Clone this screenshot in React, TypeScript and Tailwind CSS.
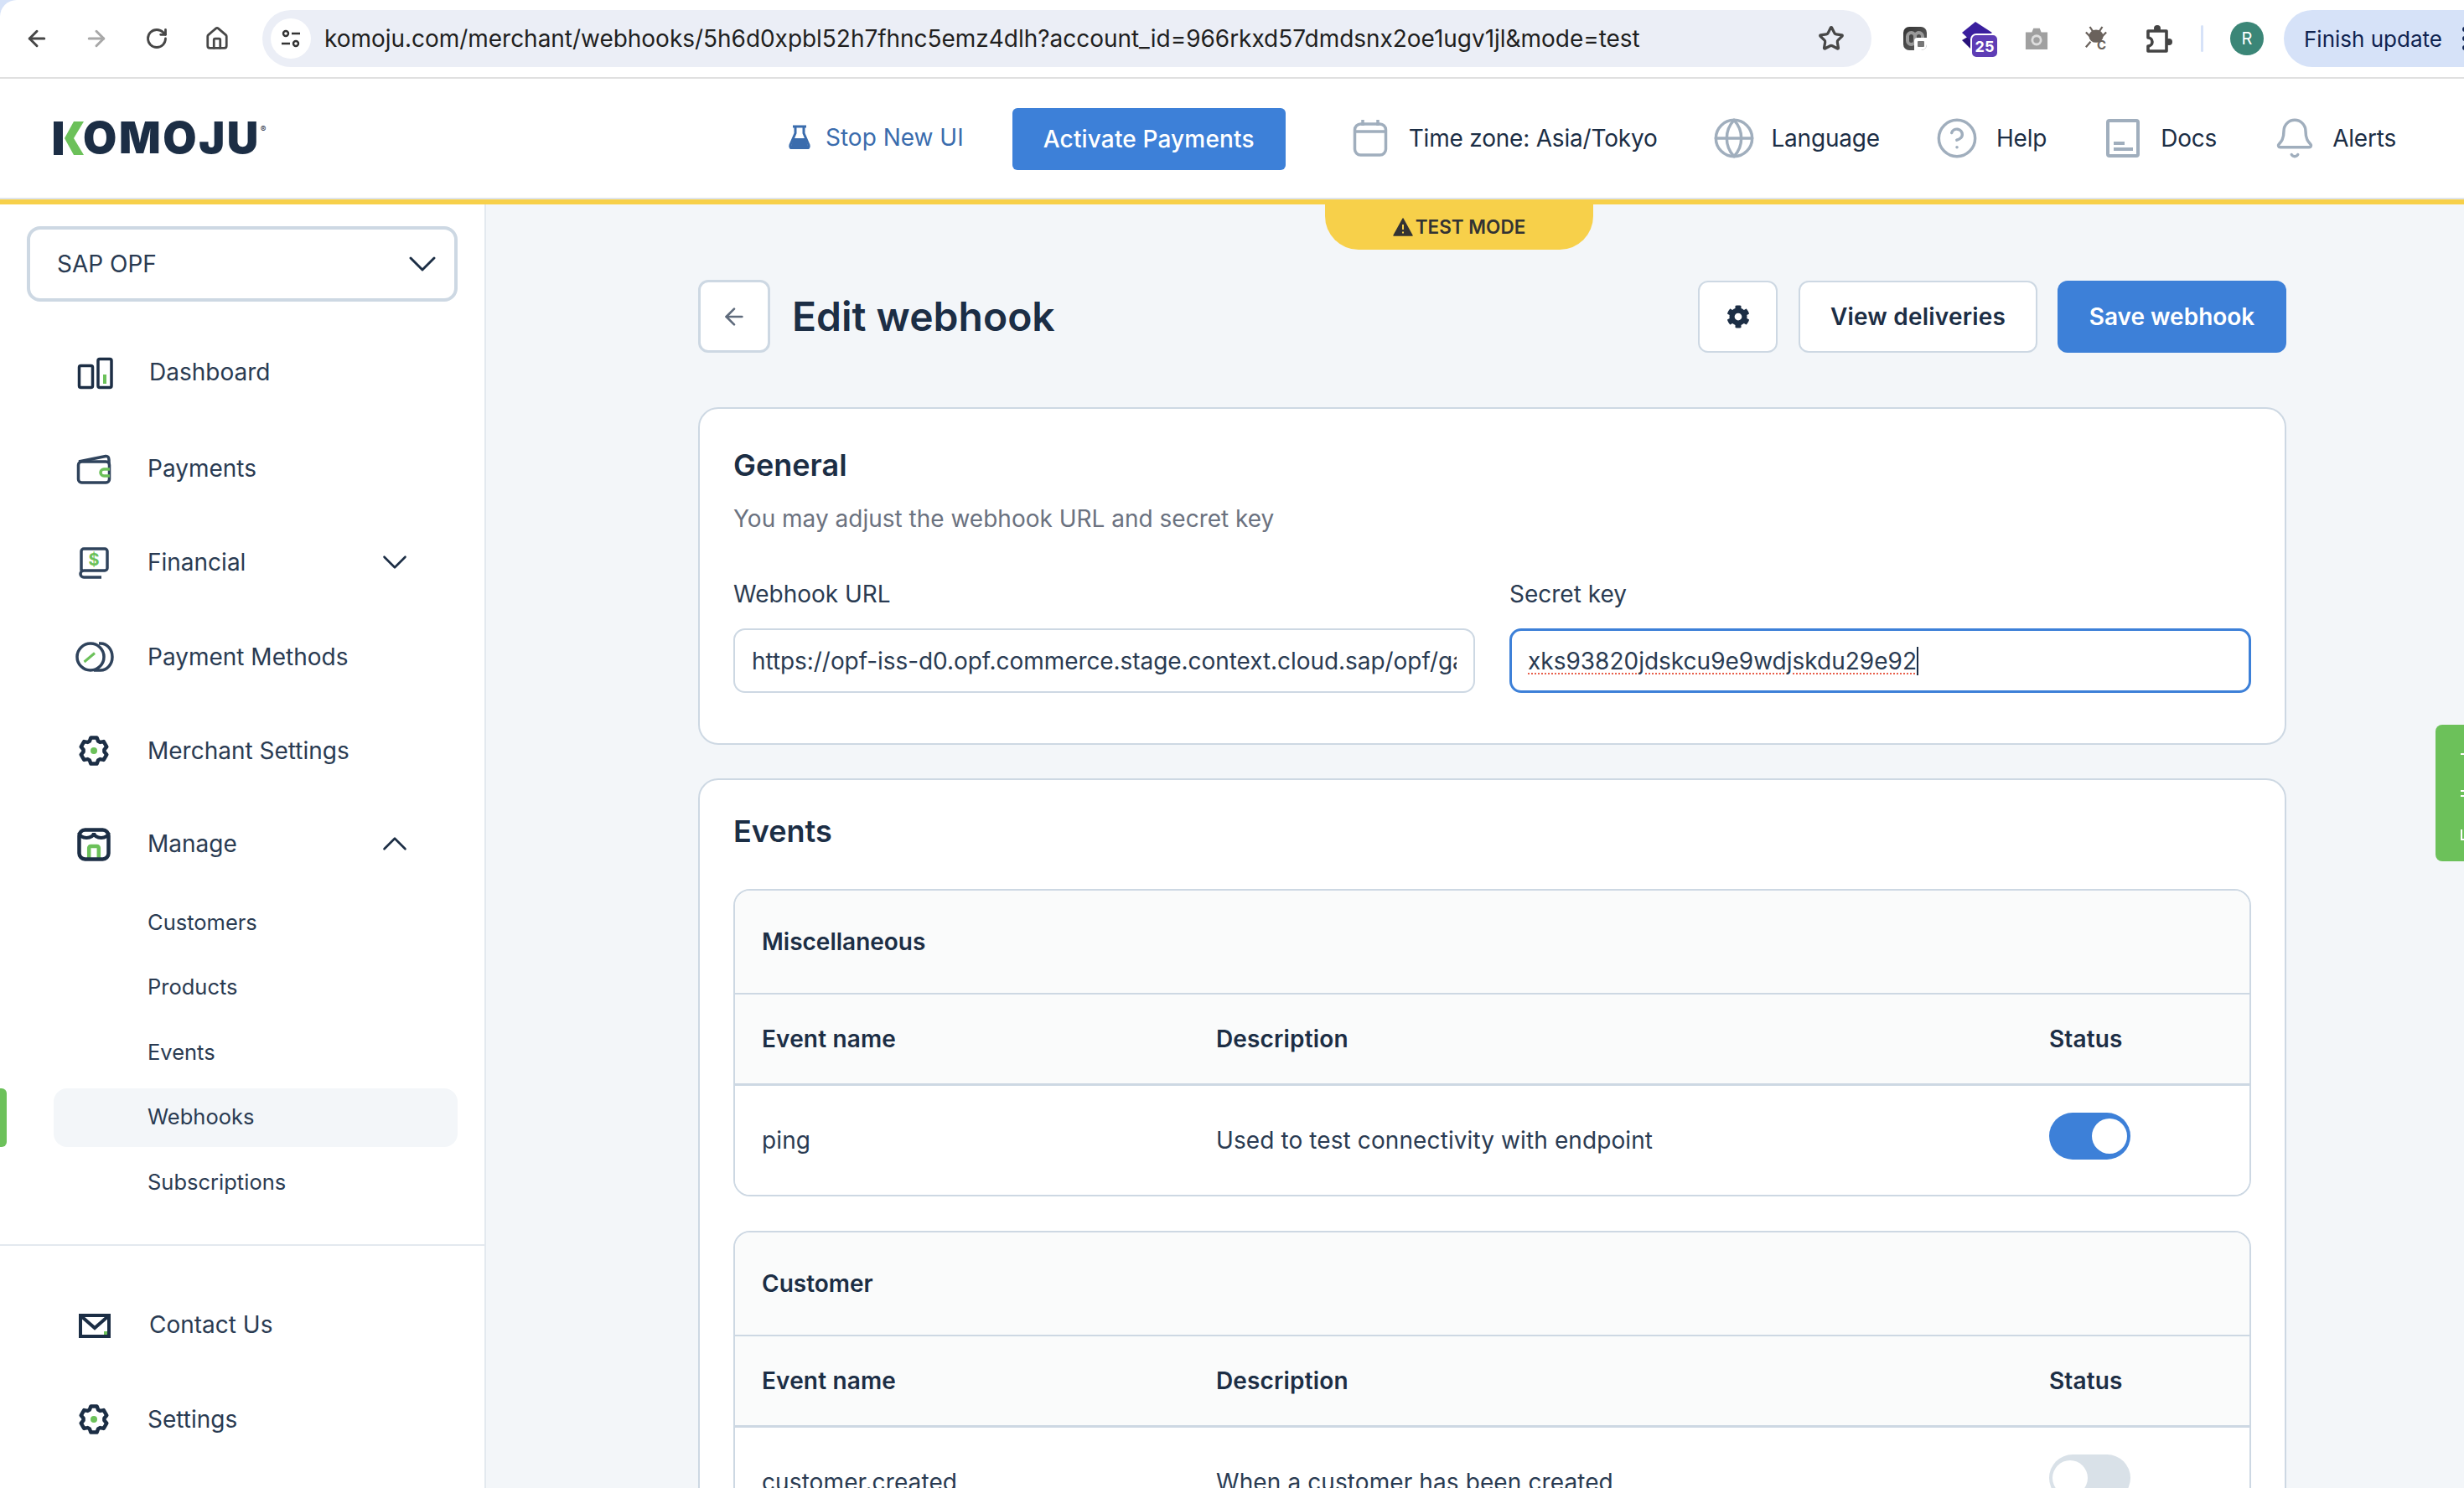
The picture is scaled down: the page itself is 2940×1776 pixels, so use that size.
import { ArrowLeft, ArrowRight, RotateCw, Home, Star, ChevronDown, ChevronUp, Globe, CircleHelp, Bell } from "lucide-react";
import { FaCog } from "react-icons/fa";

const NAVY = "#1c2e45";
const GREEN = "#6cc15a";

// six squared teeth, rounded off by the stroke join
const GEAR = Array.from({ length: 6 }, (_, i) => {
  const a = i * 60 - 90;
  const pt = (deg: number, r: number) => {
    const t = ((a + deg) * Math.PI) / 180;
    return `${(24 + r * Math.cos(t)).toFixed(2)} ${(24 + r * Math.sin(t)).toFixed(2)}`;
  };
  return `${i === 0 ? "M" : "L"}${pt(-24, 12.5)} L${pt(-13, 16)} L${pt(13, 16)} L${pt(24, 12.5)}`;
}).join(" ") + " Z";

function DashIcon() {
  return (
    <svg width="48" height="48" viewBox="0 0 48 48" fill="none" stroke={NAVY} strokeWidth="3.5">
      <rect x="6.5" y="16.5" width="16" height="26" rx="2" />
      <rect x="29" y="8.5" width="16" height="34" rx="2" />
      <rect x="35" y="27" width="4" height="11" fill={GREEN} stroke="none" />
    </svg>
  );
}

function WalletIcon() {
  return (
    <svg width="48" height="48" viewBox="0 0 48 48" fill="none" stroke="#2f435c" strokeWidth="3.5">
      <rect x="5.5" y="16" width="37" height="25" rx="4" />
      <path d="M6 16 L38 9.5 Q42 9 42 14 V18" />
      <path d="M43 25 H36 a4 4 0 0 0 0 8 H43" stroke={GREEN} />
    </svg>
  );
}

function FinancialIcon() {
  return (
    <svg width="48" height="48" viewBox="0 0 48 48" fill="none" stroke="#2f435c" strokeWidth="3.5">
      <path d="M9 34 V11 a3 3 0 0 1 3-3 H37 a3 3 0 0 1 3 3 V31 a3 3 0 0 1-3 3 H12 a3 3 0 0 0 0 8 H33" />
      <text x="24" y="28" textAnchor="middle" fontFamily="Inter, sans-serif" fontWeight="700" fontSize="20" fill={GREEN} stroke="none">$</text>
    </svg>
  );
}

function MethodsIcon() {
  return (
    <svg width="48" height="48" viewBox="0 0 48 48" fill="none" stroke="#2f435c" strokeWidth="3.5">
      <circle cx="20" cy="24" r="16" />
      <path d="M30 8 H32 a14 16 0 0 1 0 32 H24" />
      <path d="M12.5 30 L25 19.5" stroke={GREEN} strokeWidth="3" />
    </svg>
  );
}

function GearIcon() {
  return (
    <svg width="48" height="48" viewBox="0 0 48 48" fill="none" stroke={NAVY} strokeWidth="4.5" strokeLinejoin="round">
      <path d={GEAR} />
      <circle cx="24" cy="24" r="4" fill={GREEN} stroke="none" />
    </svg>
  );
}

function ShopIcon() {
  return (
    <svg width="48" height="48" viewBox="0 0 48 48" fill="none" stroke={NAVY} strokeWidth="4">
      <path d="M18.2 42 V29 a2 2 0 0 1 2-2 H27.8 a2 2 0 0 1 2 2 V42" stroke={GREEN} strokeWidth="4.5" />
      <rect x="6.5" y="7.5" width="35" height="35" rx="7" strokeWidth="4.5" />
      <path d="M6.5 11 a8.75 6 0 0 0 17.5 0 M24 11 a8.75 6 0 0 0 17.5 0" />
    </svg>
  );
}

function MailIcon() {
  return (
    <svg width="48" height="48" viewBox="0 0 48 48" fill="none" stroke={NAVY} strokeWidth="4">
      <rect x="8" y="13" width="34" height="25" />
      <path d="M9 14 L25 28 L41 14" />
      <rect x="36" y="32" width="4" height="4" fill={GREEN} stroke="none" />
    </svg>
  );
}

function Logo() {
  return (
    <div className="ml-16 flex h-[40px] w-[255px] items-center">
      <svg width="38" height="40" viewBox="0 0 38 40" className="shrink-0">
        <rect x="0" y="0" width="11" height="40" fill={NAVY} />
        <path d="M13 20 L24 0 H36 L24 20 L36 40 H24 Z" fill={GREEN} />
      </svg>
      <span className="-ml-[3px] text-[52px] leading-[40px] font-black tracking-[2.6px] text-[#1c2e45]">OMOJU</span>
      <span className="mb-[22px] text-[10px] leading-none text-[#1c2e45]">®</span>
    </div>
  );
}

function BrowserBar() {
  return (
    <div className="bg-[#d6e2f8]">
      <div className="flex h-[92px] items-center overflow-hidden rounded-tl-[20px] bg-white pl-8">
        <ArrowLeft size={30} strokeWidth={2.4} className="-ml-[3px] shrink-0 text-[#474747]" />
        <ArrowRight size={30} strokeWidth={2.4} className="ml-[41px] shrink-0 text-[#a8a8a8]" />
        <RotateCw size={28} strokeWidth={2.4} className="ml-[43px] shrink-0 text-[#474747]" />
        <Home size={30} strokeWidth={2.2} className="ml-[43px] shrink-0 text-[#474747]" />
        <div className="ml-[39px] flex h-[68px] w-[1920px] shrink-0 items-center rounded-full bg-[#ebeef6] pl-[10px] pr-[32px]">
          <div className="flex size-[48px] items-center justify-center rounded-full bg-white">
            <svg width="26" height="26" viewBox="0 0 26 26" fill="none" stroke="#333" strokeWidth="2.4">
              <circle cx="7" cy="7" r="3" />
              <path d="M14 7 H24 M2 19 H12" />
              <circle cx="19" cy="19" r="3" />
            </svg>
          </div>
          <span className="ml-4 flex-1 text-[28px] tracking-[-0.03px] text-[#1f1f1f]">
            komoju.com/merchant/webhooks/5h6d0xpbl52h7fhnc5emz4dlh?account_id=966rkxd57dmdsnx2oe1ugv1jl&amp;mode=test
          </span>
          <Star size={32} strokeWidth={2.4} className="text-[#474747]" />
        </div>
        <div className="relative ml-[38px] size-[28px] shrink-0 overflow-hidden rounded-[7px] bg-[linear-gradient(135deg,#333,#666)]">
          <div className="absolute left-[3px] top-[5px] h-[18px] w-[13px] rounded-full border-[4px] border-[#9a9a9a]" />
          <div className="absolute left-[12px] top-[5px] h-[18px] w-[13px] rounded-full border-[4px] border-[#9a9a9a]" />
          <div className="absolute bottom-0 right-0 flex size-[15px] items-center justify-center rounded-tl-[4px] bg-white">
            <div className="h-[7px] w-[8px] rounded-[1px] bg-[#777]" />
          </div>
        </div>
        <div className="relative ml-[42px] h-[48px] w-[44px] shrink-0">
          <svg width="44" height="48" viewBox="0 0 44 48" className="absolute left-0 top-0">
            <path d="M0 26 L10 20 L20 38 L10 36 Z" fill="#28127a" />
            <path d="M16 4 L36 17 L16 32 L0 17 Z" fill="#3a1f9e" />
          </svg>
          <div className="absolute left-[10px] top-[18px] flex h-[30px] w-[34px] items-center justify-center rounded-[7px] border-2 border-white bg-[#5e3db5] text-[18px] font-bold text-white">25</div>
        </div>
        <svg width="30" height="28" viewBox="0 0 32 30" className="ml-[30px] shrink-0">
          <path d="M2 7 H10 L12 2 H20 L22 7 H30 V29 H2 Z" fill="#a0a0a0" />
          <circle cx="16" cy="17" r="7" fill="#dedede" />
          <circle cx="16" cy="17" r="4" fill="#a0a0a0" />
        </svg>
        <svg width="28" height="32" viewBox="0 0 30 34" className="ml-[42px] shrink-0" fill="none" stroke="#6a625c" strokeWidth="2.4">
          <path d="M7 2 L11 8 M23 2 L19 8 M2 9 L8 15 M28 9 L22 15 M2 28 L8 21" />
          <ellipse cx="15" cy="14" rx="8" ry="7" fill="#6a625c" />
          <text x="22" y="31" textAnchor="middle" fontFamily="Inter, sans-serif" fontWeight="700" fontSize="16" fill="#6a625c" stroke="none">C</text>
        </svg>
        <svg width="34" height="36" viewBox="0 0 34 36" className="ml-[44px] shrink-0" fill="none" stroke="#444" strokeWidth="3.6">
          <circle cx="15" cy="6" r="4" fill="#444" stroke="none" />
          <circle cx="29" cy="22" r="4" fill="#444" stroke="none" />
          <path d="M4 9 H26 V33 H4 V27 a5 5 0 0 0 0-10 Z" strokeLinejoin="round" />
        </svg>
        <div className="ml-[33px] h-[32px] w-[3px] shrink-0 rounded-full bg-[#d6e2f8]" />
        <div className="ml-[32px] flex size-[40px] shrink-0 items-center justify-center rounded-full bg-[#3b8677] text-[20px] text-white">R</div>
        <div className="ml-[24px] flex h-[68px] flex-1 items-center rounded-l-full bg-[#d6e2f8] pl-[24px]">
          <span className="text-[26px] whitespace-nowrap text-[#0f2350]">Finish update</span>
          <div className="ml-[24px] flex shrink-0 flex-col gap-[5px]">
            <div className="size-[6px] rounded-full bg-[#0f2350]" />
            <div className="size-[6px] rounded-full bg-[#0f2350]" />
            <div className="size-[6px] rounded-full bg-[#0f2350]" />
          </div>
        </div>
      </div>
      <div className="h-[2px] bg-[#e0e0e0]" />
    </div>
  );
}

function TopNav() {
  return (
    <div className="flex h-[150px] items-center border-b-[6px] border-[#f7d04a] bg-white pb-[2px] text-[28px] tracking-[-0.2px] text-[#1c2e45] shadow-[inset_0_-2px_0_#dfe5eb]">
      <Logo />
      <svg width="26" height="30" viewBox="0 0 26 30" className="mb-[4px] ml-[622px]">
        <path d="M8 3 V11 L2 25 Q1 29 5 29 H21 Q25 29 24 25 L18 11 V3" fill="none" stroke="#3a6cad" strokeWidth="3" />
        <path d="M5 3 H21" stroke="#3a6cad" strokeWidth="3" />
        <path d="M6 17 H20 L24 29 H2 Z" fill="#3a6cad" />
      </svg>
      <span className="mb-[2px] ml-[18px] tracking-normal text-[#3a6cad]">Stop New UI</span>
      <div className="ml-[58px] mt-[2px] flex h-[74px] w-[326px] items-center justify-center rounded-[6px] bg-[#3d80d8] font-medium tracking-[0.15px] text-white">Activate Payments</div>
      <svg width="42" height="46" viewBox="0 0 42 46" fill="none" stroke="#a0aebd" strokeWidth="3.5" className="ml-[80px]">
        <rect x="2.5" y="6" width="37" height="37" rx="7" />
        <path d="M3 15 H39 M12 1 V8 M30 1 V8" />
      </svg>
      <span className="ml-[25px]">Time zone: Asia/Tokyo</span>
      <Globe size={52} strokeWidth={1.6} className="ml-[66px] text-[#a0aebd]" />
      <span className="ml-[18px]">Language</span>
      <CircleHelp size={52} strokeWidth={1.6} className="ml-[66px] text-[#a0aebd]" />
      <span className="ml-[21px]">Help</span>
      <svg width="40" height="46" viewBox="0 0 40 46" fill="none" stroke="#a0aebd" strokeWidth="4" className="ml-[71px]">
        <rect x="2" y="2" width="36" height="42" rx="2" />
        <path d="M9 29 H22 M9 36 H32" />
      </svg>
      <span className="ml-[25px]">Docs</span>
      <Bell size={52} strokeWidth={1.6} className="ml-[67px] text-[#a0aebd]" />
      <span className="ml-[19px]">Alerts</span>
    </div>
  );
}

function NavRow({ icon, label, chevron, textMl = "ml-[40px]", extra = "" }: { icon: React.ReactNode; label: string; chevron?: "up" | "down"; textMl?: string; extra?: string }) {
  return (
    <div className={`flex h-[112px] items-center pl-[88px] text-[28px] text-[#2a3b52] ${extra}`}>
      {icon}
      <span className={textMl}>{label}</span>
      {chevron === "down" && <ChevronDown size={50} strokeWidth={1.25} className="absolute left-[446px] text-[#1c2e45]" />}
      {chevron === "up" && <ChevronUp size={50} strokeWidth={1.25} className="absolute left-[446px] text-[#1c2e45]" />}
    </div>
  );
}

function SubRow({ label, active }: { label: string; active?: boolean }) {
  return (
    <div className={`relative ml-16 flex h-[70px] w-[482px] shrink-0 items-center rounded-[16px] pl-[112px] text-[25.5px] text-[#2a3b52] ${active ? "bg-[#f3f6f9]" : ""}`}>
      {active && <div className="absolute -left-16 top-0 h-[70px] w-[8px] rounded-r-[6px] bg-[#6cc15a]" />}
      {label}
    </div>
  );
}

function Sidebar() {
  return (
    <aside className="relative flex h-full w-[580px] shrink-0 flex-col border-r-2 border-[#e3e9ef] bg-white">
      <div className="ml-8 mt-[26px] flex h-[90px] w-[514px] items-center justify-between rounded-[16px] border-[4px] border-[#cdd8e3] pl-[32px] pr-[18px] text-[28px] text-[#2a3b52]">
        SAP OPF
        <ChevronDown size={56} strokeWidth={1.25} className="-mr-[8px] text-[#1c2e45]" />
      </div>
      <div className="mt-[28px]">
        <NavRow icon={<DashIcon />} label="Dashboard" textMl="ml-[42px]" />
        <NavRow icon={<WalletIcon />} label="Payments" extra="mt-[3px]" />
        <NavRow icon={<FinancialIcon />} label="Financial" chevron="down" />
        <NavRow icon={<MethodsIcon />} label="Payment Methods" extra="mt-[1px]" />
        <NavRow icon={<GearIcon />} label="Merchant Settings" />
        <NavRow icon={<ShopIcon />} label="Manage" chevron="up" extra="-mt-[1px]" />
      </div>
      <div className="mt-[3px] flex flex-col gap-[7.5px]">
        <SubRow label="Customers" />
        <SubRow label="Products" />
        <SubRow label="Events" />
        <SubRow label="Webhooks" active />
        <SubRow label="Subscriptions" />
      </div>
      <div className="mt-[39px] h-[2px] bg-[#e3e9ef]" />
      <div className="mt-[38px]">
        <NavRow icon={<MailIcon />} label="Contact Us" textMl="ml-[42px]" />
        <NavRow icon={<GearIcon />} label="Settings" extra="mt-[1px]" />
      </div>
    </aside>
  );
}

function Toggle({ on }: { on?: boolean }) {
  return (
    <div className={`mb-[10px] flex h-[56px] w-[97px] items-center rounded-full px-[4px] ${on ? "justify-end bg-[#3d80d8]" : "justify-start bg-[#d9e1e8]"}`}>
      <div className="size-[42px] rounded-full bg-white" />
    </div>
  );
}

function EventTable({ title, name, desc, on }: { title: string; name: string; desc: string; on?: boolean }) {
  return (
    <div className="overflow-hidden rounded-[20px] border-2 border-[#cdd8e3]">
      <div className="flex h-[124px] items-center border-b-2 border-[#cdd8e3] bg-[#fafbfb] pl-8 text-[28px] font-semibold text-[#1c2e45]">{title}</div>
      <div className="grid h-[109px] grid-cols-[542px_994px_1fr] items-center border-b-[3px] border-[#cdd8e3] bg-[#fafbfb] pl-8 text-[28px] font-semibold tracking-[0.15px] text-[#1c2e45]">
        <div>Event name</div>
        <div>Description</div>
        <div>Status</div>
      </div>
      <div className="grid h-[130px] grid-cols-[542px_994px_1fr] items-center bg-white pl-8 text-[28px] tracking-[0.1px] text-[#2a3b52]">
        <div>{name}</div>
        <div>{desc}</div>
        <Toggle on={on} />
      </div>
    </div>
  );
}

function Main() {
  return (
    <main className="relative h-full flex-1 bg-[#f3f6f9] pl-[253px] pt-[90px]">
      <div className="absolute left-[1001px] top-0 flex h-[54px] w-[320px] items-center justify-center gap-[3px] rounded-b-[40px] bg-[#f7d04a] text-[22.5px] font-semibold text-[#333]">
        <svg width="24" height="22" viewBox="0 0 24 22">
          <path d="M12 1 L23 21 H1 Z" fill="#333" stroke="#333" strokeWidth="1.5" strokeLinejoin="round" />
          <path d="M12 8 V14 M12 16.5 V18.5" stroke="#f7d04a" strokeWidth="2" />
        </svg>
        TEST MODE
      </div>
      <div className="w-[1895px]">
        <div className="flex items-center">
          <div className="flex h-[87px] w-[86px] items-center justify-center rounded-[12px] border-[3px] border-[#cdd8e3] bg-white">
            <ArrowLeft size={32} strokeWidth={2} className="text-[#5f6b7c]" />
          </div>
          <h1 className="ml-[26px] flex-1 text-[48px] font-semibold text-[#1c2e45]">Edit webhook</h1>
          <div className="flex h-[86px] w-[95px] items-center justify-center rounded-[12px] border-2 border-[#cdd8e3] bg-white">
            <FaCog size={28} color="#1c2e45" />
          </div>
          <div className="ml-[25px] flex h-[86px] w-[285px] items-center justify-center rounded-[12px] border-2 border-[#cdd8e3] bg-white text-[28px] font-semibold tracking-[0.2px] text-[#1c2e45]">View deliveries</div>
          <div className="ml-[24px] flex h-[86px] w-[273px] items-center justify-center rounded-[12px] bg-[#3d80d8] text-[28px] font-semibold text-white">Save webhook</div>
        </div>

        <section className="mt-[65px] h-[403px] rounded-[24px] border-2 border-[#cdd8e3] bg-white px-10 pt-[45px]">
          <h2 className="text-[36px] leading-[44px] font-semibold text-[#1c2e45]">General</h2>
          <p className="mt-[22px] text-[28px] leading-[40px] text-[#6b7280]">You may adjust the webhook URL and secret key</p>
          <div className="mt-[52px] grid grid-cols-2 gap-x-[41px]">
            <div>
              <label className="block text-[28px] leading-[36px] text-[#2a3b52]">Webhook URL</label>
              <input
                readOnly
                value="https://opf-iss-d0.opf.commerce.stage.context.cloud.sap/opf/gateway/webhooks/komoju/notifications"
                className="mt-[23px] h-[77px] w-full rounded-[14px] border-2 border-[#cdd8e3] bg-white px-[20px] text-[28px] tracking-[-0.06px] text-[#2a3b52] outline-none"
              />
            </div>
            <div>
              <label className="block text-[28px] leading-[36px] text-[#2a3b52]">Secret key</label>
              <div className="mt-[23px] flex h-[77px] w-full items-center rounded-[14px] border-[3px] border-[#3d80d8] bg-white px-[19px] text-[28px] text-[#2a3b52]">
                <span className="underline decoration-[#e8604c] decoration-dotted decoration-2 underline-offset-[5px]">xks93820jdskcu9e9wdjskdu29e92</span>
                <span className="h-[34px] w-[2px] bg-[#1c2e45]" />
              </div>
            </div>
          </div>
        </section>

        <section className="mt-[40px] rounded-t-[24px] border-2 border-[#cdd8e3] bg-white px-10 pb-10 pt-[39px]">
          <h2 className="text-[36px] leading-[44px] font-semibold text-[#1c2e45]">Events</h2>
          <div className="mt-[47px]">
            <EventTable title="Miscellaneous" name="ping" desc="Used to test connectivity with endpoint" on />
          </div>
          <div className="mt-[41px]">
            <EventTable title="Customer" name="customer.created" desc="When a customer has been created" />
          </div>
        </section>
      </div>
      <div className="absolute right-0 top-[621px] h-[163px] w-[34px] overflow-hidden rounded-l-[8px] bg-[#6cc15a]">
        <svg width="34" height="163" viewBox="0 0 34 163" fill="#fff">
          <rect x="30" y="34" width="4" height="2" />
          <rect x="30" y="78" width="4" height="2" />
          <rect x="30" y="84" width="4" height="2" />
          <rect x="30" y="125" width="2" height="13" />
          <rect x="30" y="136" width="4" height="2" />
        </svg>
      </div>
    </main>
  );
}

export default function App() {
  return (
    <div className="h-[1776px] w-[2940px] overflow-hidden bg-white font-['Inter',sans-serif]">
      <BrowserBar />
      <TopNav />
      <div className="flex h-[1532px] overflow-hidden">
        <Sidebar />
        <Main />
      </div>
    </div>
  );
}
